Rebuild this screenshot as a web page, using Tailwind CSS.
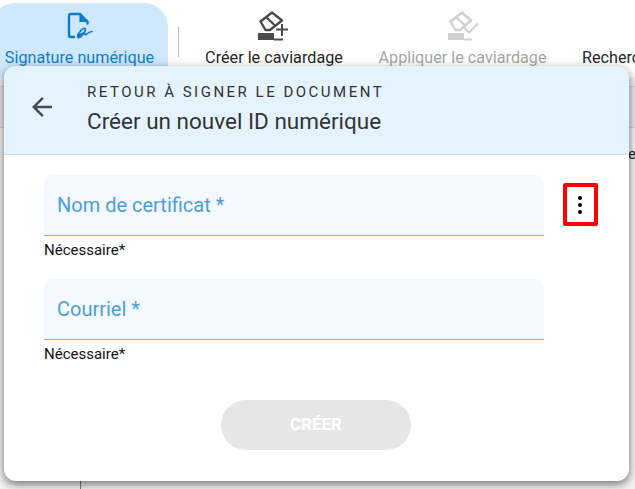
<!DOCTYPE html>
<html lang="fr">
<head>
  <meta charset="UTF-8">
  <title>Créer un nouvel ID numérique</title>
  <script src="https://cdn.jsdelivr.net/npm/@tailwindcss/browser@4"></script>
</head>
<body class="bg-white">
  <div class="relative w-[635px] h-[489px] overflow-hidden bg-white font-['Roboto',sans-serif]">
    <!-- toolbar -->
    <div class="flex h-[77px] items-start">
      <div class="shrink-0 mt-[3px] ml-[-9px] w-[177px] h-[74px] rounded-t-[24px] bg-[#cfe8fd] flex flex-col items-center pt-[8px] text-[#0f7cc9]">
        <svg width="28" height="30" viewBox="0 0 28 30" fill="none" stroke="#0f7cc9" stroke-linecap="round" stroke-linejoin="round">
          <path stroke-width="2.4" d="M8 26H5C3.800 26 3 25.200 3 24V5C3 3.800 3.800 3 5 3H14L21.500 10.500V12.500"/>
          <path stroke-width="1.2" fill="#0f7cc9" d="M14 3.500V10.500H21.500Z"/>
          <path stroke-width="1.700" d="M11.500 26C12 22 16.500 16.500 19 17.500C21 18.500 15.500 26 13 26.500C11 27 13.500 22.500 18.500 21.500C18 23.500 19.500 24.500 21 22.800C22 21.700 24 20.800 26 20.500"/>
        </svg>
        <span class="mt-[7px] text-[16.200px] leading-[20px] whitespace-nowrap">Signature numérique</span>
      </div>
      <div class="shrink-0 ml-[10px] mt-[27px] w-px h-[30px] bg-[#bdbdbd]"></div>
      <div class="shrink-0 ml-[26px] w-[138px] flex flex-col items-center pt-[11px] text-[#262626]">
        <svg width="32" height="30" viewBox="0 0 32 30" fill="none">
          <path d="M2.500 10.500 14 1.500 24 9.500 12 19 7.500 19Z" stroke="#4a4a4a" stroke-width="2.400" stroke-linejoin="round"/>
          <path d="M8 6 17 14.500" stroke="#4a4a4a" stroke-width="2.400"/>
          <path d="M0 22H16V29H0Z" fill="#4a4a4a"/>
          <path d="M16 28.500H25M18 18.500H30M24 13V25" stroke="#4a4a4a" stroke-width="2"/>
        </svg>
        <span class="mt-[7px] text-[16.200px] leading-[20px] whitespace-nowrap">Créer le caviardage</span>
      </div>
      <div class="shrink-0 ml-[36px] w-[167px] flex flex-col items-center pt-[11px] text-[#a6a6a6]">
        <svg width="32" height="30" viewBox="0 0 32 30" fill="none">
          <path d="M3.500 10.500 15 1.500 24 9.500 13 19 8.500 19Z" stroke="#cfcfcf" stroke-width="2.400" stroke-linejoin="round"/>
          <path d="M9 6 18 14.500" stroke="#cfcfcf" stroke-width="2.400"/>
          <path d="M1 22H17V29H1Z" fill="#cfcfcf"/>
          <path d="M17 16.500 22 21.500 31 12.500M17 28.500H25" stroke="#cfcfcf" stroke-width="2"/>
        </svg>
        <span class="mt-[7px] text-[16.200px] leading-[20px] whitespace-nowrap">Appliquer le caviardage</span>
      </div>
      <span class="shrink-0 ml-[36px] mt-[48px] text-[16.200px] leading-[20px] text-[#262626] whitespace-nowrap">Recherche</span>
    </div>

    <!-- page behind the dialog -->
    <div class="absolute left-0 top-[77px] w-[635px] h-[412px] bg-[#f2f2f2]">
      <div class="absolute left-0 top-[9px] w-full h-[42px] bg-[#e9e9e9] border-y border-[#d4d4d4]"></div>
      <div class="absolute left-[80px] top-[380px] w-px h-[32px] bg-[#777]"></div>
    </div>
    <span class="absolute left-[628px] top-[145px] text-[15px] leading-[18px] text-[#222]">e</span>

    <!-- dialog -->
    <div class="absolute left-[4px] top-[66px] w-[625px] h-[415px] rounded-[12px] bg-white shadow-[0_3px_10px_rgba(0,0,0,0.55)] overflow-hidden">
      <div class="flex h-[89px] bg-[#e5f3fe] border-b border-[#cfdde8]">
        <div class="w-[83px] flex pt-[26px] pl-[23px]">
          <svg width="30" height="30" viewBox="0 0 24 24" fill="#4a4a4a"><path d="M20 11H7.830l5.590-5.590L12 4l-8 8 8 8 1.410-1.410L7.830 13H20v-2z"/></svg>
        </div>
        <div class="pt-[17px] text-[#333]">
          <div class="text-[15px] leading-[18px] tracking-[2.5px] whitespace-nowrap">RETOUR À SIGNER LE DOCUMENT</div>
          <div class="mt-[6px] text-[22.500px] leading-[28px] whitespace-nowrap">Créer un nouvel ID numérique</div>
        </div>
      </div>
      <div class="flex flex-col pl-[40px] pt-[20px]">
        <div class="flex items-start">
          <div class="w-[500px]">
            <div class="h-[61px] bg-[#f3f9fe] rounded-t-[8px] border-b border-[#6db9ea] pl-[13px] pt-[16px] text-[20px] leading-[28px] text-[#4a9fd8]">Nom de certificat *</div>
            <div class="mt-[5px] text-[15px] leading-[18px] text-[#111]">Nécessaire*</div>
          </div>
          <div class="ml-[19px] mt-[8px] w-[35px] h-[43px] rounded-[2px] border-[4px] border-[#ff0000] flex flex-col items-center justify-center gap-[3px] pr-[2px]">
            <span class="w-[4px] h-[4px] rounded-full bg-black"></span>
            <span class="w-[4px] h-[4px] rounded-full bg-black"></span>
            <span class="w-[4px] h-[4px] rounded-full bg-black"></span>
          </div>
        </div>
        <div class="w-[500px] mt-[20px]">
          <div class="h-[61px] bg-[#f3f9fe] rounded-t-[8px] border-b border-[#6db9ea] pl-[13px] pt-[16px] text-[20px] leading-[28px] text-[#4a9fd8]">Courriel *</div>
          <div class="mt-[5px] text-[15px] leading-[18px] text-[#111]">Nécessaire*</div>
        </div>
      </div>
      <div class="mt-[37px] ml-[217px] w-[190px] h-[50px] rounded-[25px] bg-[#e6e6e6] flex items-center justify-center text-[17px] font-bold text-white">CRÉER</div>
    </div>
  </div>
</body>
</html>
